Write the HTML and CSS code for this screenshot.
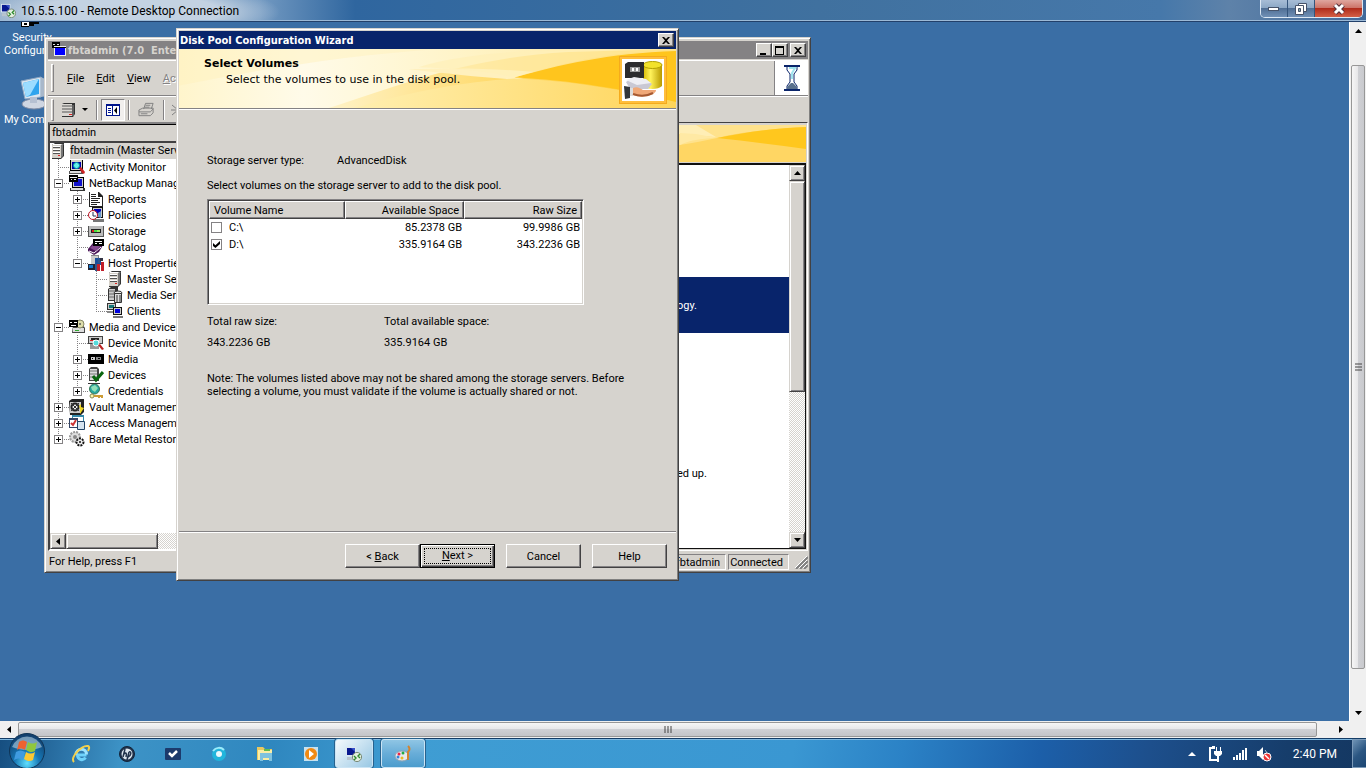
FILE: index.html
```
<!DOCTYPE html>
<html lang="en">
<head>
<meta charset="utf-8">
<title>10.5.5.100 - Remote Desktop Connection</title>
<link rel="stylesheet" href="styles.css">
</head>
<body>
<svg class="sprite" aria-hidden="true">
  <defs>
    <symbol id="server" viewBox="0 0 16 16"><path d="M2 2l3-2h9v13l-3 3H2z" fill="#333"/><path d="M2 2h9v13H2z" fill="#d4d0c8"/><path d="M3 1h11l-3 1H3z" fill="#fff"/><path d="M11 2l2-1v12l-2 2z" fill="#777"/><path d="M3 4h7v1H3zM3 7h7v1H3zM3 10h7v1H3z" fill="#555"/><path d="M3 3h7v1H3zM3 6h7v1H3zM3 9h7v1H3z" fill="#fff"/><path d="M8 12h2v1H8z" fill="#d22"/></symbol>
    <symbol id="activity" viewBox="0 0 16 16"><path d="M1 1h13v11H1z" fill="#000"/><path d="M2 1h11v10H2z" fill="#d4d0c8"/><path d="M3 3h9v7H3z" fill="#00a"/><path d="M0 12h14v3H0z" fill="#555"/><path d="M1 12h11v2H1z" fill="#ddd"/><circle cx="7.500" cy="6.500" r="3" fill="#6ee" stroke="#099"/><path d="M10 9l2-1 4 5-1 2-2-1z" fill="#c22"/></symbol>
    <symbol id="netbackup" viewBox="0 0 16 16"><path d="M3 2h12v11H3z" fill="#000"/><path d="M4 3h10v9H4z" fill="#ccc"/><path d="M5 4h8v7H5z" fill="#11c"/><path d="M1 13h15v3H1z" fill="#333"/><path d="M2 13h12v2H2z" fill="#ddd"/><path d="M0 0h9v7H0z" fill="#000"/><path d="M1 2h7v1H1zM2 4h1v1H2zM5 4h2v1H5z" fill="#eee"/></symbol>
    <symbol id="reports" viewBox="0 0 16 16"><path d="M1 1h10l4 4v11H1z" fill="#222"/><path d="M2 1h8v5h4v9H2z" fill="#fff"/><path d="M3 3h5v1H3zM3 5h5v1H3zM3 7h9v1H3zM3 9h7v1H3zM3 11h9v1H3zM3 13h6v1H3zM10 1l4 4h-4z" fill="#222"/></symbol>
    <symbol id="policies" viewBox="0 0 16 16"><path d="M4 0h11v11H4z" fill="#111"/><path d="M5 1h9v9H5z" fill="#ccc"/><path d="M6 2h7v7H6z" fill="#00b"/><path d="M5 12h11v3H5z" fill="#777"/><circle cx="5" cy="8" r="4.500" fill="#fff" stroke="#b12"/><path d="M5 5v4h3" fill="none" stroke="#235"/><path d="M10 6l3-2v7l-3-1z" fill="#69c"/></symbol>
    <symbol id="storage" viewBox="0 0 16 16"><path d="M0 3h16v11H0z" fill="#555"/><path d="M1 3h14v10H1z" fill="#bbb"/><path d="M3 6h10v4H3z" fill="#222"/><path d="M4 7h2v2H4z" fill="#d22"/><path d="M6 7h3v2H6z" fill="#4d4"/><path d="M9 7h3v2H9z" fill="#9e6"/></symbol>
    <symbol id="catalog" viewBox="0 0 16 16"><path d="M0 10l5-6 10 2-4 7-5 3-6-4z" fill="#4b1558"/><path d="M1 12l5 2 7-6" fill="none" stroke="#fff"/><path d="M2 9l4-4 6 2-4 5z" fill="#84488f"/><path d="M5 0h11v7H5z" fill="#000"/><path d="M7 2h7v1H7zM7 4h2v1H7zM11 4h3v1h-3z" fill="#fff"/></symbol>
    <symbol id="host" viewBox="0 0 16 16"><path d="M3 0h8v10H3z" fill="#888"/><path d="M3 1h7v8H3z" fill="#ccc"/><path d="M7 3h6v7H7z" fill="#1a4f9a"/><path d="M0 9h7v6H0z" fill="#223"/><path d="M1 10h4v3H1z" fill="#17c"/><path d="M10 2l2 3v3h-2zM7 9h2v7H7z" fill="#358"/><path d="M9 9h3v7H9zM13 7h3v9h-3z" fill="#c21f2b"/><path d="M12 3h3v3h-3z" fill="#334"/></symbol>
    <symbol id="media-server" viewBox="0 0 16 16"><path d="M1 2l3-2h7v11l-3 3H1z" fill="#333"/><path d="M2 2h6v11H2z" fill="#ccc"/><path d="M2 4h6M2 7h6M2 10h6" stroke="#666"/><ellipse cx="11" cy="6" rx="4" ry="2" fill="#eee" stroke="#333"/><path d="M7.500 6.500h7v9h-7z" fill="#ddd" stroke="#333"/><path d="M10 8v8M13 8v8" stroke="#333"/></symbol>
    <symbol id="clients" viewBox="0 0 16 16"><path d="M0 0h9v7H0z" fill="#333"/><path d="M1 1h7v5H1z" fill="#ccc"/><path d="M2 2h5v3H2z" fill="#177"/><path d="M0 8h9v2H0z" fill="#888"/><path d="M6 4h9v8H6z" fill="#111"/><path d="M7 5h7v6H7z" fill="#ccc"/><path d="M8 6h5v4H8z" fill="#00d"/><path d="M6 13h10v2H6z" fill="#777"/></symbol>
    <symbol id="media-device" viewBox="0 0 16 16"><path d="M4 6h10l2 3v5H3z" fill="#444"/><path d="M4 9h11v4H4z" fill="#ddd"/><circle cx="11" cy="5" r="4" fill="#dda" stroke="#886"/><circle cx="11" cy="5" r="1" fill="#555"/><path d="M0 1h9v7H0z" fill="#000"/><path d="M1 3h2v1H1zM5 3h3v1H5zM2 6h5v1H2z" fill="#fff"/><path d="M6 11h4v1H6z" fill="#3a3"/></symbol>
    <symbol id="device-monitor" viewBox="0 0 16 16"><path d="M0 1h15v8H0z" fill="#444"/><path d="M1 2h13v6H1z" fill="#ccc"/><path d="M3 3h8v2H3z" fill="#222"/><path d="M2 5h3v1H2z" fill="#d22"/><path d="M2 9h9v5H2z" fill="#999"/><circle cx="8" cy="8" r="3" fill="#5dd" stroke="#fff"/><path d="M10 10l2-1 4 5-2 1z" fill="#b22"/></symbol>
    <symbol id="media" viewBox="0 0 16 16"><path d="M0 3h16v10H0z" fill="#000"/><path d="M3 6h4v3H3z" fill="#ccc"/><path d="M8 6h5v3H8z" fill="#888"/><path d="M4 7h1v1H4zM10 7h2v1h-2z" fill="#000"/></symbol>
    <symbol id="devices" viewBox="0 0 16 16"><path d="M1 2l2-2h6l2 2v12H1z" fill="#444"/><path d="M2 2h7v11H2z" fill="#ddd"/><path d="M2 4h7M2 7h7M2 10h7" stroke="#777"/><path d="M5 9l3 4 7-8" fill="none" stroke="#0a650f" stroke-width="3"/></symbol>
    <symbol id="credentials" viewBox="0 0 16 16"><circle cx="6.500" cy="6" r="5" fill="#29a7a1" stroke="#375"/><path d="M3 4l4-2 3 3-3 4-3-2z" fill="#8fe0b8"/><path d="M0 0h12" stroke="#333" stroke-width="2"/><circle cx="4" cy="13" r="2" fill="#fff7a6" stroke="#885"/><path d="M6 13h8v2M11 12v3" fill="none" stroke="#cc9c35" stroke-width="2"/></symbol>
    <symbol id="vault" viewBox="0 0 16 16"><path d="M0 2l3-2h12v13l-3 3H1z" fill="#222"/><path d="M1 3h11v11H1z" fill="#ccc"/><circle cx="6" cy="8" r="3.500" fill="#eee" stroke="#222" stroke-width="2"/><path d="M2 4l8 8M10 4l-8 8" stroke="#333"/><path d="M10 7l2-2v3l3 1-4 6v-5z" fill="#eed624"/></symbol>
    <symbol id="access" viewBox="0 0 16 16"><path d="M3 0h12v11H3z" fill="#38a"/><path d="M4 2h10v8H4z" fill="#fff"/><path d="M0 3h9v10H0z" fill="#346"/><path d="M1 5h7v7H1z" fill="#fff"/><path d="M2 8l2 2 3-5" fill="none" stroke="#c33" stroke-width="2"/><path d="M8.500 6.500h7v8h-7z" fill="#d5e3ef" stroke="#246"/></symbol>
    <symbol id="bare" viewBox="0 0 16 16"><circle cx="6" cy="6" r="5" fill="#ddd" stroke="#999" stroke-width="2" stroke-dasharray="2 1"/><circle cx="6" cy="6" r="2" fill="#888"/><circle cx="11" cy="11" r="3.500" fill="#eee" stroke="#111" stroke-width="2" stroke-dasharray="2 1"/><circle cx="11" cy="11" r="1" fill="#111"/></symbol>
    <symbol id="rdp" viewBox="0 0 16 16"><path d="M0 1h10v9H0z" fill="#dce6f0"/><path d="M1 2h8v7H1z" fill="#08188f"/><path d="M5 2h4v4z" fill="#3550c8"/><path d="M1 11h7v3H1z" fill="#b8c4ce"/><circle cx="11" cy="11" r="4.600" fill="#e4efe0" stroke="#7a8a78"/><path d="M8 10l2 2-2 2M14 8l-2 2 2 2" fill="none" stroke="#2b8a2b" stroke-width="1.400"/></symbol>
    <symbol id="dialog-close" viewBox="0 0 10 9"><path d="M1 1h2l2 2 2-2h2L6 4.500 9 8H7L5 6 3 8H1l3-3.500z" fill="#000"/></symbol>
  </defs>
</svg>

<header class="rdp-title">
  <svg class="rdp-icon" viewBox="0 0 16 16"><use href="#rdp"/></svg>
  <span class="rdp-text">10.5.5.100 - Remote Desktop Connection</span>
  <div class="aero-buttons">
    <button class="aero aero-min" aria-label="Minimize"><svg width="14" height="10" viewBox="0 0 14 10"><rect x="1.500" y="3.500" width="10" height="3" fill="#fff" stroke="#46536a"/></svg></button>
    <button class="aero aero-max" aria-label="Restore"><svg width="14" height="14" viewBox="0 0 14 14"><path d="M4.500 1.500h8v8h-8z" fill="#fff" stroke="#46536a"/><path d="M1.500 3.500h8v9h-8z" fill="#fff" stroke="#46536a"/><path d="M4.500 6.500h2v3h-2z" fill="#8aa" stroke="#46536a"/></svg></button>
    <button class="aero aero-close" aria-label="Close"><svg width="14" height="12" viewBox="0 0 14 12"><path d="M3 2l8 8M11 2l-8 8" stroke="#54303a" stroke-width="5"/><path d="M3 2l8 8M11 2l-8 8" stroke="#fff" stroke-width="3"/></svg></button>
  </div>
</header>

<div class="session">
  <main class="desktop">
    <div class="shortcut security">
      <svg width="18" height="6" viewBox="0 0 18 6"><path d="M0 0h18v2h-5v2H8v1H0z" fill="#000"/><path d="M1 0h7v4H1z" fill="#fff"/><path d="M3 1h3v2H3z" fill="#000"/></svg>
      <span class="center">Security</span><span>Configur</span>
    </div>
    <div class="shortcut computer">
      <svg width="34" height="36" viewBox="0 0 34 36"><path d="M3 5l20-4v20L7 23z" fill="#d9e5f0" stroke="#8ca6c2"/><path d="M5 7l16-4v15L8 21z" fill="#2fa4ee"/><path d="M5 7l16-4-9 16-4 2z" fill="#9bdcff"/><path d="M23 1l6 3v16l-6 1z" fill="#a8b8ca"/><ellipse cx="16" cy="28" rx="12" ry="5" fill="#cfd6e2" stroke="#7f8ba4"/><path d="M12 21h7v6h-7z" fill="#b5c0d2"/></svg>
      <span>My Comp</span>
    </div>

    <section class="window console">
      <div class="titlebar inactive">
        <svg class="ico" viewBox="0 0 16 16"><path d="M1 0h8v6H1z" fill="#000"/><path d="M2 2h2v1H2zM6 2h2v1H6z" fill="#ddd"/><path d="M3 4h12v10H3z" fill="#eee"/><path d="M4 6h10v7H4z" fill="#00f"/><path d="M3 5h12v1H3z" fill="#000"/></svg>
        <span class="title-text">fbtadmin (7.0&nbsp; Enter</span>
        <button class="cap" aria-label="Minimize"><svg width="10" height="9" viewBox="0 0 10 9"><path d="M1 7h6v2H1z"/></svg></button>
        <button class="cap" aria-label="Maximize"><svg width="10" height="9" viewBox="0 0 10 9"><path d="M0 0h9v9H0zM1 2v6h7V2z" fill-rule="evenodd"/></svg></button>
        <button class="cap apart" aria-label="Close"><svg width="10" height="9"><use href="#dialog-close"/></svg></button>
      </div>
      <div class="menurow">
        <nav class="menubar">
          <i class="grip"></i>
          <button><u>F</u>ile</button><button><u>E</u>dit</button><button><u>V</u>iew</button><button class="dim"><u>A</u>cti</button>
        </nav>
        <div class="busy"><svg width="20" height="26" viewBox="0 0 20 26"><path d="M2 1h16M2 25h16" stroke="#0a246a" stroke-width="2"/><path d="M5 2v3l3 4v8l-3 4v3M15 2v3l-3 4v8l3 4v3" fill="none" stroke="#0a246a"/><path d="M7 3h6l-3 5v6" fill="none" stroke="#9fe4ee" stroke-width="2"/><path d="M5 24v-2l4-4h2l4 4v2z" fill="#59708c"/></svg></div>
      </div>
      <div class="toolbar">
        <i class="grip"></i>
        <button class="tool" aria-label="New server"><svg class="ico" viewBox="0 0 16 16"><path d="M1 2l2-1h11v11l-2 3H1z" fill="#333"/><path d="M1 2h10v12H1z" fill="#dcd9d4"/><path d="M1 4h10M1 7h10M1 10h10" stroke="#555"/><path d="M12 3v11" stroke="#888"/><path d="M8 12h3v1H8z" fill="#d22"/></svg></button>
        <button class="tool drop" aria-label="Server list"><svg width="6" height="4" viewBox="0 0 6 4"><path d="M0 0h6L3 3z"/></svg></button>
        <i class="sep"></i>
        <button class="tool pressed" aria-label="Show tree"><svg width="14" height="12" viewBox="0 0 14 12"><path d="M0 0h14v12H0z" fill="#00148c"/><path d="M1 2h5v9H1zM7 2h6v9H7z" fill="#fff"/><path d="M2 4h3v1H2zM2 6h3v1H2zM2 8h3v1H2z" fill="#00148c"/><path d="M11 3v7L8 6.500z" fill="#000"/></svg></button>
        <i class="sep"></i>
        <button class="tool print" aria-label="Print"><svg width="17" height="16" viewBox="0 0 18 16" fill="none" stroke="#808080"><path d="M6 7l2-6h8l-2 6M1 8l4-2h11v5l-3 3H1zM1 10h12M13 10l3-3M8 3h5M7 5h5M3 12h7"/></svg></button>
        <i class="sep"></i>
        <svg class="cut" width="8" height="14" viewBox="0 0 8 14"><path d="M1 2l6 5M0 7h8M1 12l6-5" stroke="#808080"/></svg>
      </div>
      <div class="panes">
        <div class="tree-pane">
          <div class="tree-head">fbtadmin</div>
          <div class="tree">
            <div class="row root"><svg class="ico" viewBox="0 0 16 16"><use href="#server"/></svg><span class="selected">fbtadmin (Master Serv</span></div>
            <div class="row"><i class="c t"></i><svg class="ico" viewBox="0 0 16 16"><use href="#activity"/></svg><span>Activity Monitor</span></div>
            <div class="row"><i class="c t"><button class="exp minus" aria-label="Collapse"></button></i><svg class="ico" viewBox="0 0 16 16"><use href="#netbackup"/></svg><span>NetBackup Manag</span></div>
            <div class="row"><i class="c v"></i><i class="c t"><button class="exp" aria-label="Expand"></button></i><svg class="ico" viewBox="0 0 16 16"><use href="#reports"/></svg><span>Reports</span></div>
            <div class="row"><i class="c v"></i><i class="c t"><button class="exp" aria-label="Expand"></button></i><svg class="ico" viewBox="0 0 16 16"><use href="#policies"/></svg><span>Policies</span></div>
            <div class="row"><i class="c v"></i><i class="c t"><button class="exp" aria-label="Expand"></button></i><svg class="ico" viewBox="0 0 16 16"><use href="#storage"/></svg><span>Storage</span></div>
            <div class="row"><i class="c v"></i><i class="c t"></i><svg class="ico" viewBox="0 0 16 16"><use href="#catalog"/></svg><span>Catalog</span></div>
            <div class="row"><i class="c v"></i><i class="c l"><button class="exp minus" aria-label="Collapse"></button></i><svg class="ico" viewBox="0 0 16 16"><use href="#host"/></svg><span>Host Propertie</span></div>
            <div class="row"><i class="c v"></i><i class="c"></i><i class="c t"></i><svg class="ico" viewBox="0 0 16 16"><use href="#server"/></svg><span>Master Se</span></div>
            <div class="row"><i class="c v"></i><i class="c"></i><i class="c t"></i><svg class="ico" viewBox="0 0 16 16"><use href="#media-server"/></svg><span>Media Ser</span></div>
            <div class="row"><i class="c v"></i><i class="c"></i><i class="c l"></i><svg class="ico" viewBox="0 0 16 16"><use href="#clients"/></svg><span>Clients</span></div>
            <div class="row"><i class="c t"><button class="exp minus" aria-label="Collapse"></button></i><svg class="ico" viewBox="0 0 16 16"><use href="#media-device"/></svg><span>Media and Device</span></div>
            <div class="row"><i class="c v"></i><i class="c t"></i><svg class="ico" viewBox="0 0 16 16"><use href="#device-monitor"/></svg><span>Device Monito</span></div>
            <div class="row"><i class="c v"></i><i class="c t"><button class="exp" aria-label="Expand"></button></i><svg class="ico" viewBox="0 0 16 16"><use href="#media"/></svg><span>Media</span></div>
            <div class="row"><i class="c v"></i><i class="c t"><button class="exp" aria-label="Expand"></button></i><svg class="ico" viewBox="0 0 16 16"><use href="#devices"/></svg><span>Devices</span></div>
            <div class="row"><i class="c v"></i><i class="c l"><button class="exp" aria-label="Expand"></button></i><svg class="ico" viewBox="0 0 16 16"><use href="#credentials"/></svg><span>Credentials</span></div>
            <div class="row"><i class="c t"><button class="exp" aria-label="Expand"></button></i><svg class="ico" viewBox="0 0 16 16"><use href="#vault"/></svg><span>Vault Management</span></div>
            <div class="row"><i class="c t"><button class="exp" aria-label="Expand"></button></i><svg class="ico" viewBox="0 0 16 16"><use href="#access"/></svg><span>Access Manageme</span></div>
            <div class="row"><i class="c l"><button class="exp" aria-label="Expand"></button></i><svg class="ico" viewBox="0 0 16 16"><use href="#bare"/></svg><span>Bare Metal Restor</span></div>
          </div>
          <div class="sb sb-h"><button class="sb-btn" aria-label="Scroll left"><svg width="4" height="7" viewBox="0 0 4 7"><path d="M4 0v7L0 3.500z"/></svg></button><div class="thumb"></div></div>
        </div>
        <div class="detail-pane">
          <svg class="detail-banner" viewBox="0 0 380 37" preserveAspectRatio="none">
            <path d="M0 0h380v37H0z" fill="#ffd663"/>
            <path d="M150 0h230v2C340 4 310 8 291 13 240 24 180 30 150 32z" fill="#ffe28c"/>
            <path d="M150 0h120l20 12-36-3-104-1z" fill="#ffeeb6"/>
            <path d="M254 20C264 15 278 13 291 13L270 9l-16-1z" fill="#ffe9a4"/>
            <path d="M291 13C320 7 350 3 380 2v22C350 20 320 16 291 13z" fill="#ffc71e"/>
          </svg>
          <div class="detail-body">
            <div class="detail-list">
              <div class="detail-item active"><span>ogy.</span></div>
              <div class="detail-item tip"><span>ed up.</span></div>
            </div>
            <div class="sb sb-v"><button class="sb-btn" aria-label="Scroll up"><svg width="7" height="4" viewBox="0 0 7 4"><path d="M0 4h7L3.500 0z"/></svg></button><div class="thumb"></div><span class="fill"></span><button class="sb-btn" aria-label="Scroll down"><svg width="7" height="4" viewBox="0 0 7 4"><path d="M0 0h7L3.500 4z"/></svg></button></div>
          </div>
        </div>
      </div>
      <footer class="status">
        <span class="help">For Help, press F1</span><span class="cell">fbtadmin</span><span class="cell">Connected</span>
        <svg width="13" height="13" viewBox="0 0 13 13"><path d="M1 13L13 1M5 13l8-8M9 13l4-4" stroke="#808080" stroke-width="2"/><path d="M0 12L12 0M4 12l8-8M8 12l4-4" stroke="#fff"/></svg>
      </footer>
    </section>

    <section class="window wizard" role="dialog" aria-label="Disk Pool Configuration Wizard">
      <div class="titlebar">
        <span class="title-text">Disk Pool Configuration Wizard</span>
        <button class="cap" aria-label="Close"><svg width="10" height="9"><use href="#dialog-close"/></svg></button>
      </div>
      <div class="banner">
        <svg class="banner-art" viewBox="0 0 498 58" preserveAspectRatio="none">
          <defs>
            <linearGradient id="b0"><stop offset="0" stop-color="#fff5cc"/><stop offset=".25" stop-color="#fffbe9"/><stop offset=".6" stop-color="#fff3c4"/><stop offset="1" stop-color="#ffe597"/></linearGradient>
            <linearGradient id="b1"><stop offset="0" stop-color="#fff3c8"/><stop offset=".5" stop-color="#ffd968"/><stop offset="1" stop-color="#ffc928"/></linearGradient>
            <linearGradient id="b2"><stop offset="0" stop-color="#ffefb0"/><stop offset="1" stop-color="#ffd55a"/></linearGradient>
          </defs>
          <path d="M0 0h498v58H0z" fill="url(#b0)"/>
          <path d="M0 0h260C170 6 80 20 0 36z" fill="#fff1bd" opacity=".5"/>
          <path d="M150 58C220 36 290 8 390 3L498 0v58z" fill="url(#b1)"/>
          <path d="M230 20C290 18 330 20 372 24L336 30C300 28 270 24 230 20z" fill="#fff0bd"/>
          <path d="M176 58C240 40 290 32 336 29c60 2 110 12 162 22v7z" fill="url(#b2)"/>
          <path d="M336 28C390 12 440 2 498 1v51C450 40 390 30 336 28z" fill="#ffc51d"/>
          <path d="M260 0h238v2C430 4 380 16 336 28 310 22 280 19 240 18 280 6 330 2 390 1z" fill="#fff0b8" opacity=".7"/>
        </svg>
        <div class="banner-text"><h1>Select Volumes</h1><p>Select the volumes to use in the disk pool.</p></div>
        <svg class="banner-icon" width="48" height="48" viewBox="0 0 48 48"><path d="M0 0h48v48H0z" fill="#f5ab1c"/><path d="M1 1h46v46H1z" fill="#ffbe3c"/><path d="M3 3h42v42H3z" fill="#fff"/><defs><linearGradient id="cyl"><stop offset="0" stop-color="#d9b900"/><stop offset=".4" stop-color="#fff25a"/><stop offset="1" stop-color="#b89a00"/></linearGradient></defs><path d="M24 9v21c4 4 15 4 19 0V9z" fill="url(#cyl)"/><ellipse cx="33.500" cy="9" rx="9.500" ry="3.500" fill="#f2e22a" stroke="#b3a100"/><path d="M6 8l3-2h16v16H6z" fill="#2c2c2e"/><path d="M11 11h10v5H11z" fill="#9a9a9a"/><path d="M13 12h2v3h-2zM17 12h2v3h-2z" fill="#fff"/><path d="M7 26l6-4 14 2 6 4-4 5H11z" fill="#c9c8d4"/><path d="M7 24l8-3 12 2 5 4-14 2z" fill="#eeeef4"/><path d="M5 30l6 1v11l-5 1z" fill="#33363b"/><path d="M11 32h3v8h-3z" fill="#ddd"/><path d="M14 32c4-2 7 0 10 2h12c2 0 1 2-2 4-8 4-14 3-20 1z" fill="#f0a878"/><path d="M14 38c8 3 14 2 20-1" fill="none" stroke="#a75a32" stroke-width="2"/></svg>
      </div>
      <div class="wizard-body">
        <dl class="server-type"><dt>Storage server type:</dt><dd>AdvancedDisk</dd></dl>
        <p class="lead">Select volumes on the storage server to add to the disk pool.</p>
        <div class="list-box">
          <table>
            <thead><tr><th class="name">Volume Name</th><th class="space">Available Space</th><th>Raw Size</th></tr></thead>
            <tbody>
              <tr><td><label><input type="checkbox">C:\</label></td><td>85.2378 GB</td><td>99.9986 GB</td></tr>
              <tr><td><label><input type="checkbox" checked>D:\</label></td><td>335.9164 GB</td><td>343.2236 GB</td></tr>
            </tbody>
          </table>
        </div>
        <div class="totals"><dl><dt>Total raw size:</dt><dd>343.2236 GB</dd></dl><dl><dt>Total available space:</dt><dd>335.9164 GB</dd></dl></div>
        <p class="note">Note: The volumes listed above may not be shared among the storage servers. Before selecting a volume, you must validate if the volume is actually shared or not.</p>
      </div>
      <div class="wizard-foot">
        <div class="pair"><button class="btn">&lt; <u>B</u>ack</button><button class="btn default"><span><u>N</u>ext &gt;</span></button></div>
        <button class="btn">Cancel</button><button class="btn">Help</button>
      </div>
    </section>
  </main>
  <div class="aero-scroll vertical">
    <button aria-label="Scroll up"><svg width="7" height="4" viewBox="0 0 7 4"><path d="M0 4h7L3.500 0z"/></svg></button>
    <div class="aero-thumb"><svg width="7" height="8" viewBox="0 0 7 8"><path d="M0 1h7M0 4h7M0 7h7" stroke="#444"/></svg></div>
    <button aria-label="Scroll down"><svg width="7" height="4" viewBox="0 0 7 4"><path d="M0 0h7L3.500 4z"/></svg></button>
  </div>
</div>
<div class="aero-scroll horizontal">
  <button aria-label="Scroll left"><svg width="4" height="7" viewBox="0 0 4 7"><path d="M4 0v7L0 3.500z"/></svg></button>
  <div class="aero-thumb"><svg width="8" height="7" viewBox="0 0 8 7"><path d="M1 0v7M4 0v7M7 0v7" stroke="#444"/></svg></div>
  <button aria-label="Scroll right"><svg width="4" height="7" viewBox="0 0 4 7"><path d="M0 0v7l4-3.500z"/></svg></button>
</div>

<footer class="taskbar">
  <button class="start" aria-label="Start"><svg width="38" height="36" viewBox="0 0 38 36"><defs><radialGradient id="orb" cx=".5" cy=".85" r=".8"><stop offset="0" stop-color="#5fe0ff"/><stop offset=".45" stop-color="#1676b4"/><stop offset="1" stop-color="#123f6d"/></radialGradient></defs><circle cx="19" cy="19" r="17.500" fill="url(#orb)" stroke="#0f3456"/><path d="M4 15a16 16 0 0130 0c-9 4-20 4-30 0z" fill="#c7dcea" opacity=".55"/><path d="M11 10c3-2 5-2 8 0l-2 8c-3-2-5-2-8 0z" fill="#ee6230"/><path d="M20 10c3 2 6 2 9 0l-2 9c-3 2-6 1-9-1z" fill="#90c73d"/><path d="M8 20c3-2 6-2 9 0l-2 8c-3-2-6-2-9 0z" fill="#3f9be0"/><path d="M18 20c3 2 6 2 9 0l-2 8c-3 2-6 1-9-1z" fill="#fbc832"/></svg></button>
  <nav class="pins">
    <button class="pin" aria-label="Internet Explorer"><svg width="20" height="20" viewBox="0 0 20 20"><path d="M15.500 11H6.500c0 5 6 6 8 2.500" fill="none" stroke="#6fd3fb" stroke-width="3"/><path d="M5 10.500c0-7 11-7 10.500 0" fill="none" stroke="#9be3ff" stroke-width="3"/><path d="M3 18C-1 14 10 1 17 2c2 1 1 3 0 5" fill="none" stroke="#f3d04b" stroke-width="2"/></svg></button>
    <button class="pin" aria-label="HP"><svg width="18" height="18" viewBox="0 0 18 18"><circle cx="9" cy="9" r="7.500" fill="#20324a" stroke="#13243a"/><circle cx="9" cy="9" r="5.500" fill="#dce6ee"/><path d="M7 4L5 12M6 9c2-2 3-1 2 3M11 7l-2 8M11 7c3-1 2 4-1 5" fill="none" stroke="#20324a" stroke-width="1.500"/></svg></button>
    <button class="pin" aria-label="Tasks"><svg width="18" height="14" viewBox="0 0 18 14"><rect x="1" y="1" width="16" height="12" rx="1" fill="#1c3a6c"/><path d="M5 6l3 3 5-5" fill="none" stroke="#fff" stroke-width="2.500"/></svg></button>
    <button class="pin" aria-label="Messenger"><svg width="18" height="18" viewBox="0 0 18 18"><circle cx="9" cy="9" r="5" fill="none" stroke="#21b5dc" stroke-width="4"/><path d="M3 6c3-4 8-4 11-1" fill="none" stroke="#9ceafa" stroke-width="2"/><circle cx="9" cy="9" r="3" fill="#e8fbff"/></svg></button>
    <button class="pin" aria-label="Explorer"><svg width="18" height="17" viewBox="0 0 18 17"><path d="M1 2h6l2 2h7v11H1z" fill="#e9c75f"/><path d="M2 5h14v10H2z" fill="#fbeea5"/><path d="M4 8h12v8h-3v-3H7v3H4z" fill="#7fc2df"/><path d="M8 4h6v2H8z" fill="#5dbb54"/></svg></button>
    <button class="pin" aria-label="Media Player"><svg width="16" height="16" viewBox="0 0 16 16"><path d="M1 1h14v14H1z" fill="#c8e2ef"/><circle cx="8" cy="8" r="6" fill="#f28a12"/><path d="M6 4l5 4-5 4z" fill="#fff"/></svg></button>
    <button class="pin running active" aria-label="Remote Desktop Connection"><svg class="ico" viewBox="0 0 16 16"><use href="#rdp"/></svg></button>
    <button class="pin running" aria-label="Paint"><svg width="18" height="18" viewBox="0 0 18 18"><ellipse cx="8" cy="11" rx="7" ry="5" fill="#e7e9ee" stroke="#8fa3b2"/><circle cx="5" cy="9" r="1.500" fill="#e24"/><circle cx="9" cy="8" r="1.500" fill="#2a4"/><circle cx="4" cy="12" r="1.500" fill="#38d"/><circle cx="8" cy="13" r="1.500" fill="#eb2"/><path d="M14 1c2 2 2 4 0 6v8" fill="none" stroke="#d28430" stroke-width="2"/></svg></button>
  </nav>
  <div class="tray">
    <button class="tray-btn" aria-label="Show hidden icons"><svg width="8" height="4" viewBox="0 0 8 4"><path d="M0 4l4-4 4 4z" fill="#fff"/></svg></button>
    <svg width="16" height="16" viewBox="0 0 16 16"><path d="M7 2H2v12h8v-3" fill="none" stroke="#fff" stroke-width="2"/><path d="M4 0h3v2H4zM8 1h1v4H8zM12 1h1v4h-1zM6 5h8v3l-2 2H8L6 8zM9 10h2v6H9z" fill="#fff"/></svg>
    <svg width="16" height="14" viewBox="0 0 16 14"><path d="M1 10h2v3H1zM4 8h2v5H4zM7 6h2v7H7zM10 3h2v10h-2zM13 1h2v12h-2z" fill="#fff"/></svg>
    <svg width="16" height="16" viewBox="0 0 16 16"><path d="M1 5h2l4-4v13l-4-4H1z" fill="#fff"/><path d="M9 4c2 2 2 5 0 7" fill="none" stroke="#bcd"/><circle cx="11" cy="11" r="4" fill="#e33" stroke="#fff"/><path d="M9 9l4 4" stroke="#fff" stroke-width="1.500"/></svg>
    <time class="clock">2:40 PM</time>
    <button class="peek" aria-label="Show desktop"></button>
  </div>
</footer>
</body>
</html>
```
FILE: styles.css
```
* { box-sizing: border-box; }
body {
  margin: 0;
  height: 100vh;
  display: flex;
  flex-direction: column;
  overflow: hidden;
  font-family: Roboto, "Liberation Sans", sans-serif;
  font-size: 11px;
  line-height: 13px;
  color: #000;
}
button { font: inherit; color: inherit; margin: 0; padding: 0; border: 0; background: none; }
h1, p, dl, dd { margin: 0; }
svg { flex: none; display: block; }
.sprite { position: absolute; width: 0; height: 0; }
.ico { width: 16px; height: 16px; }

/* Remote session title bar */
.rdp-title {
  flex: none;
  height: 22px;
  display: flex;
  align-items: center;
  gap: 5px;
  padding-left: 1px;
  background: radial-gradient(ellipse 150px 30px at 130px 12px, #c3d2e2 60%, transparent 100%), linear-gradient(90deg, #8fabc9, #7299c1 19%, #2f669f 26%, #40719f 60%, #4678aa 85%, #5e82a9 90%, #41699a);
  border-bottom: 1px solid #22406a;
  box-shadow: inset 0 -1px #9cb9d6;
}
.rdp-icon { width: 15px; height: 15px; }
.rdp-text { flex: 1; font-size: 12px; line-height: 16px; }
.aero-buttons {
  align-self: flex-start;
  display: flex;
  height: 18px;
  margin-right: 3px;
  border: 1px solid #dce8f4;
  border-top: 0;
  border-radius: 0 0 5px 5px;
  overflow: hidden;
}
.aero { display: flex; align-items: center; justify-content: center; width: 27px; border-right: 1px solid #34557c; background: linear-gradient(#a7bdd6, #8aa6c4 50%, #506f95 50%, #7090b6); }
.aero-close { width: 47px; border: 0; background: linear-gradient(#dfa79f, #cb6f63 50%, #b02d1c 50%, #d35f46); }

/* Remote desktop */
.session { flex: 1; min-height: 0; display: flex; }
.desktop { flex: 1; position: relative; overflow: hidden; background: #3a6ea5; }
.shortcut { position: absolute; left: 4px; width: 56px; display: flex; flex-direction: column; color: #fff; }
.security { top: 0; }
.security svg { margin: 0 0 3px 17px; }
.security .center { align-self: center; }
.computer { top: 54px; }
.computer svg { margin: 0 0 1px 14px; }

.window {
  position: absolute;
  display: flex;
  flex-direction: column;
  padding: 2px;
  background: #d6d3ce;
  border: 1px solid;
  border-color: #d6d3ce #424142 #424142 #d6d3ce;
  box-shadow: inset 1px 1px #fff, inset -1px -1px #808080;
}
.titlebar { flex: none; height: 18px; display: flex; align-items: center; padding-right: 2px; background: #08246b; color: #fff; }
.title-text { flex: 1; font-family: "DejaVu Sans Condensed", "Noto Sans", sans-serif; font-weight: bold; padding-left: 1px; }
.inactive { background: #848284; color: #d6d3ce; padding-left: 3px; }
.inactive .title-text { padding-left: 1px; }
.cap { width: 16px; height: 14px; display: flex; align-items: center; justify-content: center; background: #d6d3ce; border: 1px solid; border-color: #fff #424142 #424142 #fff; box-shadow: inset -1px -1px #848284; }
.apart { margin-left: 2px; }

/* Administration console */
.console { left: 44px; top: 15px; width: 767px; height: 536px; padding: 3px 2px 1px 3px; }
.menurow { display: flex; height: 36px; margin-top: 1px; border-top: 1px solid #fff; border-bottom: 1px solid #848284; }
.menubar { flex: 1; display: flex; align-items: center; padding-left: 3px; border-right: 1px solid #848284; }
.menubar button { margin-right: 12px; }
.grip { width: 3px; height: 28px; border: 1px solid; border-color: #fff #848284 #848284 #fff; }
.menubar .grip { margin-right: 13px; }
.dim { color: #848284; text-shadow: 1px 1px #fff; }
.busy { width: 33px; display: flex; align-items: center; justify-content: center; background: #fff; }
.toolbar { display: flex; align-items: center; height: 26px; padding-left: 3px; border-top: 1px solid #fff; }
.toolbar .grip { height: 22px; margin-right: 7px; }
.tool { height: 22px; display: flex; align-items: center; justify-content: center; }
.drop { width: 16px; }
.print { width: 27px; }
.pressed { width: 24px; background: #f1efed; border: 1px solid; border-color: #848284 #fff #fff #848284; }
.sep { width: 2px; height: 20px; margin: 0 3px; border-left: 1px solid #848284; border-right: 1px solid #fff; }
.cut { margin-left: 3px; }
.panes { flex: 1; min-height: 0; display: flex; }
.tree-pane { width: 260px; display: flex; flex-direction: column; background: #fff; border: 2px solid; border-color: #848284 #fff #fff #424142; }
.tree-head { height: 19px; padding: 0 2px; background: #d6d3ce; border-top: 1px solid #000; border-bottom: 2px solid #424142; line-height: 16px; }
.tree { flex: 1; }
.row { height: 16px; display: flex; align-items: center; white-space: nowrap; }
.row .ico { margin-right: 4px; }
.selected { background: #d6d3ce; height: 16px; line-height: 16px; flex: 1; }
.c { position: relative; width: 19px; height: 16px; display: flex; align-items: center; padding-left: 4px; background-repeat: no-repeat; }
.v { background-image: repeating-linear-gradient(#848284 0 1px, transparent 1px 2px); background-size: 1px 16px; background-position: 8px 0; }
.t { background-image: repeating-linear-gradient(#848284 0 1px, transparent 1px 2px), repeating-linear-gradient(90deg, #848284 0 1px, transparent 1px 2px); background-size: 1px 16px, 11px 1px; background-position: 8px 0, 8px 8px; }
.l { background-image: repeating-linear-gradient(#848284 0 1px, transparent 1px 2px), repeating-linear-gradient(90deg, #848284 0 1px, transparent 1px 2px); background-size: 1px 8px, 11px 1px; background-position: 8px 0, 8px 8px; }
.exp { width: 9px; height: 9px; border: 1px solid #848284; background: linear-gradient(#000, #000) 1px 3px / 5px 1px no-repeat, linear-gradient(#000, #000) 3px 1px / 1px 5px no-repeat, #fff; }
.minus { background: linear-gradient(#000, #000) 1px 3px / 5px 1px no-repeat, #fff; }

.sb { display: flex; background: repeating-conic-gradient(#d6d3ce 0 25%, #fff 0 50%) 0 0 / 2px 2px; }
.sb-h { height: 16px; }
.sb-v { width: 16px; flex-direction: column; }
.sb-btn, .thumb { background: #d6d3ce; border: 1px solid; border-color: #d6d3ce #424142 #424142 #d6d3ce; box-shadow: inset 1px 1px #fff, inset -1px -1px #848284; }
.sb-btn { width: 16px; height: 16px; flex: none; display: flex; align-items: center; justify-content: center; }
.sb-h .thumb { width: 92px; }
.sb-v .thumb { flex: 210; }
.fill { flex: 141; }

.detail-pane { flex: 1; display: flex; flex-direction: column; padding: 2px 1px 1px 0; border: 1px solid; border-color: #424142 #fff #fff #848284; }
.detail-banner { align-self: flex-end; width: 380px; height: 37px; }
.detail-body { flex: 1; display: flex; margin-top: 1px; border-top: 2px solid #111; border-right: 1px solid #111; border-bottom: 1px solid #111; background: #fff; }
.detail-list { flex: 1; padding-top: 112px; padding-bottom: 1px; }
.detail-item { height: 56px; display: flex; align-items: center; padding-left: 368px; }
.detail-item.active { background: #08246b; color: #fff; }
.detail-item.tip { margin-top: 112px; }
.status { height: 19px; margin-top: 1px; display: flex; align-items: center; gap: 2px; }
.help { flex: 1; padding-left: 1px; }
.cell { height: 16px; padding: 1px 5px 0 1px; border: 1px solid; border-color: #848284 #fff #fff #848284; }
.status svg { margin: 2px 0 0 4px; }

/* Wizard */
.wizard { left: 176px; top: 6px; width: 503px; height: 553px; }
.banner { position: relative; height: 60px; display: flex; align-items: flex-start; justify-content: space-between; padding: 7px 9px 0 25px; border-bottom: 1px solid #848284; box-shadow: 0 1px #fff; }
.banner-art { position: absolute; inset: 0; width: 100%; height: 100%; }
.banner-text, .banner-icon { position: relative; }
.banner-text { font-family: "DejaVu Sans", Verdana, sans-serif; font-size: 11px; line-height: 16px; }
.banner-text h1 { font-size: 11px; line-height: 16px; }
.banner-text p { padding-left: 22px; }
.wizard-body { flex: 1; display: flex; flex-direction: column; padding: 45px 50px 0 28px; }
.server-type { display: flex; }
.server-type dt { width: 130px; }
.lead { margin-top: 12px; }
.list-box { width: 377px; height: 106px; margin-top: 7px; background: #fff; border: 1px solid; border-color: #848284 #fff #fff #848284; box-shadow: inset 1px 1px #424142, inset -1px -1px #d6d3ce; padding: 1px; }
table { width: 100%; border-collapse: separate; border-spacing: 0; }
th { height: 18px; padding: 0 4px; font-weight: normal; text-align: right; background: #d6d3ce; border: 1px solid; border-color: #fff #424142 #424142 #fff; box-shadow: inset -1px -1px #848284; }
.name { width: 136px; text-align: left; }
.space { width: 119px; }
td { height: 17px; padding: 0 2px; text-align: right; }
td:first-child { text-align: left; }
label { display: flex; align-items: center; gap: 7px; }
input { appearance: none; width: 11px; height: 11px; margin: 0; border: 1px solid #848284; background: #fff; }
input:checked { display: grid; place-items: center; }
input:checked::before { content: ""; width: 7px; height: 7px; background: #000; clip-path: polygon(0 30%, 35% 60%, 100% 0, 100% 42%, 35% 100%, 0 72%); }
.totals { display: flex; margin-top: 10px; }
.totals dl { width: 177px; }
.totals dd { margin-top: 8px; }
.note { margin-top: 23px; }
.wizard-foot { height: 47px; display: flex; justify-content: flex-end; gap: 11px; padding: 12px 9px 0 0; border-top: 1px solid #848284; box-shadow: inset 0 1px #fff; }
.pair { display: flex; }
.btn { width: 75px; height: 24px; border: 1px solid; border-color: #fff #424142 #424142 #fff; box-shadow: inset -1px -1px #848284; background: #d6d3ce; }
.default { border: 1px solid #000; box-shadow: inset 1px 1px #fff, inset -1px -1px #424142, inset -2px -2px #848284; padding: 3px; }
.default span { display: block; height: 16px; line-height: 14px; border: 1px dotted #000; }

/* Session scrollbars */
.aero-scroll { flex: none; display: flex; background: #f0f0f0; }
.aero-scroll button { flex: none; width: 17px; height: 17px; display: flex; align-items: center; justify-content: center; }
.vertical { width: 17px; flex-direction: column; border-left: 1px solid #fff; }
.aero-thumb { display: flex; align-items: center; justify-content: center; border: 1px solid #979797; border-radius: 2px; }
.vertical .aero-thumb { height: 604px; margin: 26px 1px auto; background: linear-gradient(90deg, #f6f6f6, #e6e6e8 50%, #cfd0d4 50%, #c9cace); }
.horizontal { height: 17px; }
.horizontal .aero-thumb { flex: 1; margin: 1px 15px 1px 1px; background: linear-gradient(#f6f6f6, #e6e6e8 50%, #cfd0d4 50%, #c4c5c9); }
.horizontal button:last-child { margin-right: 17px; }

/* Taskbar */
.taskbar {
  flex: none;
  height: 30px;
  display: flex;
  align-items: center;
  border-top: 1px solid #143c66;
  box-shadow: inset 0 1px #7fb8e0;
  background: linear-gradient(100deg, #164e80, #2c74a8 5%, #3d93c6 9%, #2f87bf 20%, #3f9dd3 30%, #3a97d2 58%, #2b82c6 66%, #1c5fa9 76%, #1d4f8c 84%, #163d6b 94%, #143761);
}
.start { position: relative; width: 38px; height: 36px; margin: -8px 0 0 8px; }
.pins { flex: 1; display: flex; align-items: center; padding-left: 12px; }
.pin { width: 46px; height: 29px; display: flex; align-items: center; justify-content: center; }
.running { width: 44px; margin-right: 2px; border: 1px solid #cbe4f4; border-radius: 3px; background: linear-gradient(#8fc5e4, #68add8 50%, #4b9ccd); box-shadow: 0 0 0 1px #27628e; }
.pins .active { width: 38px; margin: 0 8px 0 1px; background: linear-gradient(135deg, #f4fafd, #bedcee 60%, #98c8e4); }
.tray { display: flex; align-items: center; gap: 8px; color: #fff; }
.tray-btn { padding: 4px; }
.clock { font-size: 12px; line-height: 16px; padding: 0 7px 0 13px; }
.peek { width: 14px; height: 29px; border: 1px solid #7b9ab9; border-right: 0; background: linear-gradient(135deg, #6f93b5, #2b5682 50%, #1c4673); }
```
